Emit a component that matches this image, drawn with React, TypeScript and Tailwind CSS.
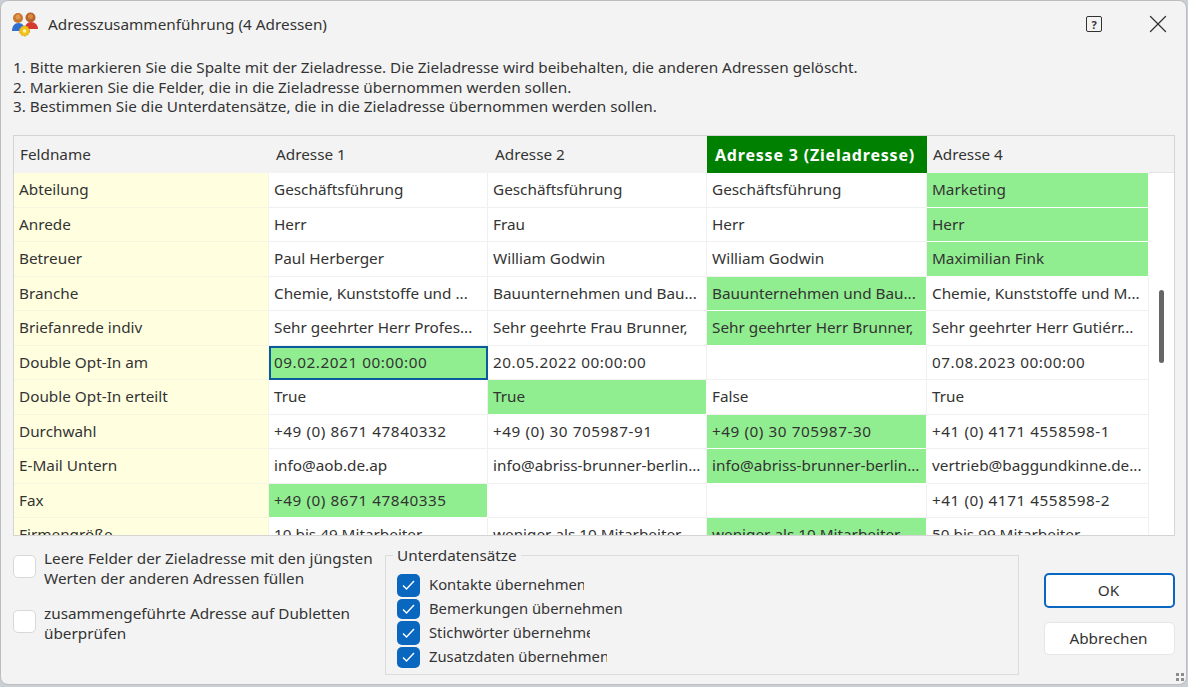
import { X } from "lucide-react";

type Row = { name: string; values: string[]; green: number[]; focus?: number };

const rows: Row[] = [
  { name: "Abteilung", values: ["Geschäftsführung", "Geschäftsführung", "Geschäftsführung", "Marketing"], green: [3] },
  { name: "Anrede", values: ["Herr", "Frau", "Herr", "Herr"], green: [3] },
  { name: "Betreuer", values: ["Paul Herberger", "William Godwin", "William Godwin", "Maximilian Fink"], green: [3] },
  { name: "Branche", values: ["Chemie, Kunststoffe und ...", "Bauunternehmen und Bau...", "Bauunternehmen und Bau...", "Chemie, Kunststoffe und M..."], green: [2] },
  { name: "Briefanrede indiv", values: ["Sehr geehrter Herr Profes...", "Sehr geehrte Frau Brunner,", "Sehr geehrter Herr Brunner,", "Sehr geehrter Herr Gutiérr..."], green: [2] },
  { name: "Double Opt-In am", values: ["09.02.2021 00:00:00", "20.05.2022 00:00:00", "", "07.08.2023 00:00:00"], green: [0], focus: 0 },
  { name: "Double Opt-In erteilt", values: ["True", "True", "False", "True"], green: [1] },
  { name: "Durchwahl", values: ["+49 (0) 8671 47840332", "+49 (0) 30 705987-91", "+49 (0) 30 705987-30", "+41 (0) 4171 4558598-1"], green: [2] },
  { name: "E-Mail Untern", values: ["info@aob.de.ap", "info@abriss-brunner-berlin...", "info@abriss-brunner-berlin...", "vertrieb@baggundkinne.de..."], green: [2] },
  { name: "Fax", values: ["+49 (0) 8671 47840335", "", "", "+41 (0) 4171 4558598-2"], green: [0] },
  { name: "Firmengröße", values: ["10 bis 49 Mitarbeiter", "weniger als 10 Mitarbeiter", "weniger als 10 Mitarbeiter", "50 bis 99 Mitarbeiter"], green: [2] },
];

// the labels are cut off by their control width in the original dialog
const subRecords = [
  { label: "Kontakte übernehmen", box: "h-[23px]", clip: "w-[155px]" },
  { label: "Bemerkungen übernehmen", box: "h-[20px]", clip: "w-[194px]" },
  { label: "Stichwörter übernehmen", box: "h-[24px]", clip: "w-[161px]" },
  { label: "Zusatzdaten übernehmen", box: "h-[21px]", clip: "w-[178px]" },
];

function AppIcon() {
  return (
    <svg width="26" height="25" viewBox="0 0 26 25">
      <circle cx="6" cy="6" r="5" fill="#c9772d" />
      <circle cx="18.5" cy="5.5" r="5" fill="#b8642a" />
      <circle cx="6" cy="5" r="2.5" fill="#e09a4f" />
      <circle cx="18.5" cy="4.5" r="2.5" fill="#d98c45" />
      <path d="M0 19c0-5 2.500-8 6.500-8s6.500 3 6.500 8z" fill="#2f6fd0" />
      <path d="M13 17c0-4 2-7 6-7s7 3 7 7z" fill="#d43a2f" />
      <circle cx="12.500" cy="19" r="5" fill="#f2c21b" stroke="#d9a514" strokeDasharray="2 1.200" />
      <circle cx="12.500" cy="19" r="1.800" fill="#fff3b0" />
    </svg>
  );
}

function GridCell({ text, green, focus }: { text: string; green: boolean; focus: boolean }) {
  let cls = "pl-[5px] border-b border-r border-[#f0f0f0] bg-white";
  if (green) cls = "pl-[5px] border-b border-r border-white bg-[#90ee90]";
  if (focus) cls = "pl-[3px] border-2 border-[#0a5a9e] bg-[#90ee90]";
  // dates and phone numbers run wider in the original font
  const numeric = /^[+\d.() :-]+$/.test(text);
  return (
    <div className={`flex items-center overflow-hidden whitespace-nowrap ${cls} ${numeric ? "tracking-[0.55px]" : ""}`}>
      {text}
    </div>
  );
}

function AddressGrid() {
  return (
    <div className="ml-[12px] mr-[11px] flex h-[401px] overflow-hidden border border-[#d4d4d4] bg-white text-[15.3px] text-[#333]">
      <div className="grid w-[1135px] shrink-0 grid-cols-[255px_219px_219px_220px_222px] grid-rows-[37px_repeat(11,34.5px)]">
        <div className="flex items-center bg-[#f3f3f3] pl-[6px]">Feldname</div>
        <div className="flex items-center bg-[#f3f3f3] pl-[7px]">Adresse 1</div>
        <div className="flex items-center bg-[#f3f3f3] pl-[7px]">Adresse 2</div>
        <div className="flex items-center whitespace-nowrap bg-[#008000] pl-[8px] text-[16px] font-bold tracking-[0.8px] text-white">Adresse 3 (Zieladresse)</div>
        <div className="flex items-center bg-[#f3f3f3] pl-[6px]">Adresse 4</div>
        {rows.map((row) => (
          <div key={row.name} className="contents">
            <div className="flex items-center border-b border-r border-[#f5f5e0] bg-[#ffffe0] pl-[5px]">{row.name}</div>
            {row.values.map((value, i) => (
              <GridCell key={i} text={value} green={row.green.includes(i)} focus={row.focus === i} />
            ))}
          </div>
        ))}
      </div>
      <div className="flex-1">
        <div className="h-[37px] border-b border-[#e4e4e4] bg-[#f3f3f3]" />
        <div className="flex justify-center pt-[117px]">
          <div className="h-[73px] w-[5px] rounded-full bg-[#666]" />
        </div>
      </div>
    </div>
  );
}

function EmptyCheck() {
  return <div className="mt-[6px] h-[23px] w-[23px] shrink-0 rounded-[5px] border border-[#d8d8d8] bg-white" />;
}

function ResizeGrip() {
  return (
    <svg className="absolute bottom-[2px] right-[1px]" width="10" height="10" viewBox="0 0 10 10" fill="#8c8c8c">
      <rect x="1" y="1" width="3" height="3" />
      <rect x="6" y="1" width="3" height="3" />
      <rect x="1" y="6" width="3" height="3" />
      <rect x="6" y="6" width="3" height="3" />
    </svg>
  );
}

export default function App() {
  return (
    <div className="h-[687px] w-[1188px] overflow-hidden bg-[#c9cfd6] font-['Noto_Sans',sans-serif] text-[#333]">
      <div className="relative flex h-[685px] w-[1187px] flex-col rounded-[8px] border border-[#bdbdbd] bg-[#f3f3f3]">
        <div className="flex h-[46px] shrink-0 items-center pl-[11px]">
          <AppIcon />
          <div className="ml-[10px] text-[15.3px]">Adresszusammenführung (4 Adressen)</div>
          <div className="ml-auto flex h-[16px] w-[16px] items-center justify-center rounded-[2px] border-[1.5px] border-[#333] text-[11px] font-bold leading-none">?</div>
          <X className="ml-[41px] mr-[13px]" size={30} strokeWidth={1} />
        </div>
        <div className="h-[11px] shrink-0" />
        <div className="ml-[12px] text-[15.3px] leading-[19.5px]">
          <div>1. Bitte markieren Sie die Spalte mit der Zieladresse. Die Zieladresse wird beibehalten, die anderen Adressen gelöscht.</div>
          <div>2. Markieren Sie die Felder, die in die Zieladresse übernommen werden sollen.</div>
          <div>3. Bestimmen Sie die Unterdatensätze, die in die Zieladresse übernommen werden sollen.</div>
        </div>
        <div className="h-[18.5px] shrink-0" />
        <AddressGrid />
        <div className="flex flex-1 text-[15.3px] leading-[19.5px]">
          <div className="ml-[12px] w-[372px] shrink-0 pt-[13px]">
            <div className="flex gap-[8px]">
              <EmptyCheck />
              <div>
                <div>Leere Felder der Zieladresse mit den jüngsten</div>
                <div>Werten der anderen Adressen füllen</div>
              </div>
            </div>
            <div className="mt-[16px] flex gap-[8px]">
              <EmptyCheck />
              <div>
                <div>zusammengeführte Adresse auf Dubletten</div>
                <div>überprüfen</div>
              </div>
            </div>
          </div>
          <fieldset className="mt-[9px] h-[130px] w-[634px] shrink-0 border border-[#dcdcdc] pl-[11px] pt-[8px]">
            <legend className="ml-[-4px] px-[4px] text-[15.3px] leading-[20px]">Unterdatensätze</legend>
            {subRecords.map((item) => (
              <div key={item.label} className="flex h-[24px] items-center gap-[9px]">
                <div className={`flex w-[23px] items-center justify-center rounded-[5px] bg-[#0a67c0] ${item.box}`}>
                  <svg width="15" height="12" viewBox="0 0 15 12" fill="none" stroke="#fff" strokeWidth="1.4">
                    <path d="M2 6.500l3.500 3.500L13 2" />
                  </svg>
                </div>
                <div className={`overflow-hidden whitespace-nowrap text-[14.8px] ${item.clip}`}>{item.label}</div>
              </div>
            ))}
          </fieldset>
          <div className="ml-[25px] flex w-[131px] flex-col pt-[37px]">
            <div className="flex h-[35px] items-center justify-center rounded-[5px] border-2 border-[#0a67c0] bg-white pr-[2px]">OK</div>
            <div className="mt-[14px] flex h-[33px] items-center justify-center rounded-[5px] border border-[#e6e6e6] bg-white pr-[2px]">Abbrechen</div>
          </div>
        </div>
        <ResizeGrip />
      </div>
    </div>
  );
}
